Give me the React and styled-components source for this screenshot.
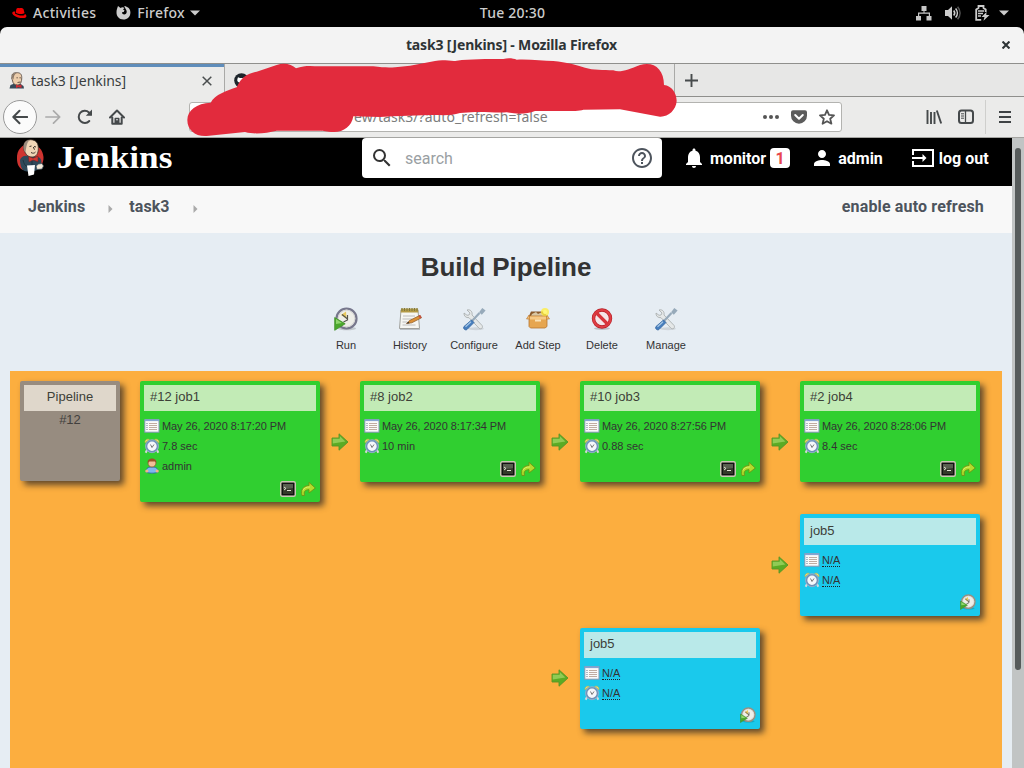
import React from 'react';
import styled, { createGlobalStyle } from 'styled-components';

const Global = createGlobalStyle`
  * { box-sizing: border-box; }
  body { margin: 0; overflow: hidden; background: #000; }
  svg { display: block; flex: none; }
`;

const ui = '"Noto Sans", "Open Sans", sans-serif';
const sans = '"Liberation Sans", Arial, sans-serif';

const Screen = styled.div`
  width: 1024px; height: 768px; overflow: hidden; position: relative;
  display: flex; flex-direction: column; font-family: ${ui};
`;
const TopBar = styled.header`
  height: 27px; background: #000; color: #ccc; font-size: 14px; font-weight: 500; flex: none;
  display: grid; grid-template-columns: 1fr auto 1fr; align-items: center; padding: 0 15px 2px 11px;
`;
const TopGroup = styled.div`
  display: flex; align-items: center; gap: ${p => p.$gap || 0}px;
  margin-left: ${p => p.$ml || 0}px;
  justify-content: ${p => (p.$end ? 'flex-end' : 'flex-start')};
`;
const StatusGroup = styled(TopGroup)`
  > svg:last-child { margin-left: -4px; }
`;
const Label = styled.span`
  white-space: nowrap; line-height: 18px; letter-spacing: ${p => p.$ls || 0}px;
  margin-left: ${p => p.$ml || 0}px;
`;
const TitleBar = styled.div`
  height: 36px; flex: none; background: #f3f3f3; border-radius: 7px 7px 0 0;
  display: grid; grid-template-columns: 24px 1fr 24px; align-items: center; padding: 0 14px 0 13px;
  font-size: 14px; font-weight: 700; color: #2e3436; text-align: center;
`;
const TabStrip = styled.div`
  height: 34px; flex: none; display: flex; background: #e7e7e6; border-top: 1px solid #8f8f8c;
`;
const Tab = styled.div`
  width: ${p => p.$w}px; display: flex; align-items: center; font-size: 14px; color: #3a3e40;
  border-right: 1px solid #a9a9a7; padding: 0 12px 0 9px;
  background: ${p => (p.$active ? '#ebebea' : 'transparent')};
  box-shadow: ${p => (p.$active ? 'inset 0 3px 0 #5f8dbb' : 'inset 0 -1px 0 #8f8f8c')};
  > svg:last-child { margin-left: auto; }
`;
const TabRest = styled.div`
  flex: 1; display: flex; align-items: center; padding-left: 9px; box-shadow: inset 0 -1px 0 #8f8f8c;
`;
const NavBar = styled.nav`
  height: 41px; flex: none; background: #ebebea; border-bottom: 1px solid #a5a5a2;
  display: flex; align-items: center; padding: 0 13px 0 3px;
`;
const NavButtons = styled.div`display: flex; align-items: center; width: 186px; gap: 16px;`;
const BackButton = styled.div`
  width: 34px; height: 34px; border: 1px solid #999; border-radius: 50%; background: #fbfbfb;
  display: grid; place-items: center; margin-right: -8px;
`;
const UrlBar = styled.div`
  width: 653px; height: 30px; border: 1px solid #b3b3b0; border-radius: 3px; background: #fff;
  display: flex; align-items: center; padding: 0 6px 0 164px; color: #7d7d7d; font-size: 14px;
`;
const UrlActions = styled.div`display: flex; gap: 12px; margin-left: auto; align-items: center;`;
const NavRight = styled.div`display: flex; margin-left: auto; align-items: center;`;
const NavRule = styled.div`width: 1px; height: 34px; background: #cfcfcd; margin: 0 13px 0 11px;`;

const Viewport = styled.main`flex: 1; min-height: 0; display: flex; background: #e6edf3;`;
const Page = styled.div`width: 1012px; font-family: ${sans};`;
const ScrollTrack = styled.div`width: 12px; background: #c1c4c4; padding: 10px 3px 0;`;
const ScrollThumb = styled.div`height: 522px; border-radius: 3px; background: #565b5b;`;

const JenkinsBar = styled.div`
  height: 48px; background: #000; display: flex; align-items: flex-start; color: #fff;
  font: 700 16px Roboto, sans-serif; padding-left: 15px;
`;
const Brand = styled.div`display: flex; width: 347px; height: 40px;`;
const Wordmark = styled.div`
  font: 700 31px/39px "Liberation Serif", serif; margin-left: 11px;
  transform: scaleX(1.135); transform-origin: left;
`;
const SearchBox = styled.div`
  width: 300px; height: 40px; background: #fff; border-radius: 4px; display: flex; align-items: center;
  padding: 0 8px 0 8px; color: #9a9fa3; font-weight: 400;
  > svg:last-child { margin-left: auto; }
  > span { padding-top: 2px; }
`;
const Account = styled.div`
  height: 40px; flex: 1; display: flex; align-items: center; padding-left: 20px;
`;
const AccountText = styled.span`
  margin-left: 4px; padding-top: 2px; line-height: 18px; white-space: nowrap;
`;
const AccountLink = styled.div`display: flex; align-items: center; margin-left: ${p => p.$ml || 0}px;`;
const Badge = styled.span`
  width: 20px; height: 20px; margin-left: 4px; border-radius: 4px; background: #fff; color: #e8474e;
  display: grid; place-items: center; margin-right: 20px;
`;
const Crumbs = styled.div`
  height: 47px; background: #f8f8f8; display: flex; align-items: center; padding: 0 28px 6px;
  font: 700 16px Roboto, sans-serif; color: #4d545d;
  > svg { margin: 5px 16px 0 23px; }
  > :last-child { margin-left: auto; }
`;
const Heading = styled.h1`
  margin: 0; padding-top: 19px; font-size: 26px; line-height: 30px; text-align: center; color: #333;
  letter-spacing: -.1px;
`;
const Actions = styled.div`display: flex; justify-content: center; margin-top: 25px; height: 64px;`;
const Action = styled.div`
  width: 64px; display: flex; flex-direction: column; align-items: center; gap: 7px;
  font-size: 11px; line-height: 14px; color: #333;
`;

const Board = styled.section`
  margin: 0 10px; height: 400px; background: #fcae3f; padding: 10px; display: grid; align-content: start;
  grid-template-columns: 120px 180px 40px 180px 40px 180px 40px 180px;
  grid-template-rows: 121px 102px 101px; row-gap: 12px; color: #333;
`;
const Card = styled.article`
  grid-column: ${p => p.$col}; grid-row: ${p => p.$row}; align-self: start;
  width: ${p => p.$w || 180}px; height: ${p => p.$h || 101}px; padding: 4px; border-radius: 2px;
  background: ${p => p.$tone.body}; box-shadow: 4px 4px 6px rgba(70, 55, 40, .85);
  display: flex; flex-direction: column;
`;
const CardTitle = styled.div`
  height: ${p => p.$h || 26}px; flex: none; background: ${p => p.$tone.title}; color: #3d4038;
  font-size: 13px; line-height: ${p => (p.$h ? 25 : 23)}px;
  padding: 0 6px; text-align: ${p => (p.$center ? 'center' : 'left')};
`;
const CardSub = styled.div`font-size: 13px; line-height: 18px; text-align: center; opacity: .85;`;
const Facts = styled.div`padding-top: 5px;`;
const Fact = styled.div`height: 20px; display: flex; align-items: center; gap: 2px; font-size: 11px;`;
const Missing = styled.span`
  line-height: 11px; border-bottom: 1px dotted #222; padding-top: 1px;
`;
const Tools = styled.div`
  display: flex; justify-content: flex-end; gap: 4px; margin-top: auto; height: ${p => p.$h}px;
`;
const ArrowCell = styled.div`
  grid-column: ${p => p.$col}; grid-row: ${p => p.$row}; display: grid; place-items: center;
  padding-bottom: ${p => (p.$row === 3 ? 2 : 0)}px;
`;

const RedHat = () => (
  <svg width="17" height="14" viewBox="0 0 17 14">
    <path d="M4.6 6.5 5.5 2.8C6.5 1.3 8 2.6 9 2.1s3 0 3.5 1l1 4c-1.8 1.4-6.4 1.3-8.9-.6Z" fill="#e00" />
    <path d="M4 5.5C.8 5.6.4 7.3 2.7 9.2c3.6 3 10 3.6 12 2.2 1.5-1.1.5-2.8-1-3.7.8 3-6.8 2-9.7-.2Z" fill="#e00" />
  </svg>
);
const FirefoxMark = () => (
  <svg width="15" height="15" viewBox="0 0 15 15">
    <path d="M2 1.1 4.5 3C6 1.700 7.500 2 8.400 3L7 4.600l1.500.7-.8 1.600-1.700.3c0 3.200 5 3 4.700-.7C10.500 4.400 9 3.500 8.200 1c4.200.7 6.300 3.400 6.200 6.700C14.200 12 11.300 14.500 7.500 14.500 3 14.500.3 11.200.5 7 .6 4.500 1.300 3.500 2 1.100Z" fill="#ccc" />
  </svg>
);
const Caret = () => <svg width="10" height="6" viewBox="0 0 10 6"><path d="M0 .5h10L5 5.500Z" fill="#ccc" /></svg>;
const Network = () => (
  <svg width="16" height="16" viewBox="0 0 16 16" fill="#c6c6c6">
    <path d="M5.500 1h5v5H8.500v1.500H14V11h1.500v4.500h-5V11h2.300V8.700H3.200V11H5v4.500H0V11h2V7.500h5.500V6h-2Z" />
  </svg>
);
const Volume = () => (
  <svg width="16" height="14" viewBox="0 0 16 14" fill="none">
    <path d="M0 4h3l4-3.700v13.400L3 10H0Z" fill="#ccc" />
    <path d="M8.700 4.500c1.200 1.500 1.200 3.500 0 5M10.600 2.500c2.300 2.600 2.300 6.400 0 9" stroke="#ccc" strokeWidth="1.600" />
    <path d="M12.600.8c3.200 3.700 3.200 8.700 0 12.400" stroke="#555" strokeWidth="1.600" />
  </svg>
);
const Battery = () => (
  <svg width="16" height="16" viewBox="0 0 16 16" fill="none" stroke="#ccc">
    <path d="M11.700 7V4.500L9.500 3V1H4.500v2L2.200 4.500v10.300h5" strokeWidth="1.800" />
    <path d="M4 6h6M4 8.500h5M4 11h3" strokeWidth="1.300" />
    <path d="m12.500 7-5 5h3l-1 3.800 6-5.800h-3.200Z" fill="#ccc" stroke="none" />
  </svg>
);
const Cross = ({ s = 10, w = 1.5, c = '#4a4e4f' }) => (
  <svg width={s} height={s} viewBox="0 0 10 10"><path d="m.7.7 8.600 8.600M9.300.7.7 9.300" stroke={c} strokeWidth={w} /></svg>
);
const Butler = () => (
  <svg width="16" height="17" viewBox="0 0 16 17">
    <path d="M.5 16.500 1.500 13l4-1.500 6 .5 3 2 .5 2.500Z" fill="#35495a" />
    <path d="M3 5C2.500 1.500 5 .5 8.500.7S13 3 12.700 7s-1.700 6-4.500 6S4 11.500 3.600 9 2 7 3 5Z" fill="#eccdab" stroke="#4d4038" strokeWidth=".8" />
    <path d="M3.300 6.500C2.500 2 5 .7 8 .9 4.800 2 5 5 4.500 7.500Z" fill="#8b7a6b" />
    <path d="M7.500 5.800h1.300M10.500 5.800h1.300M8.500 10.500l3-.5" stroke="#40342d" strokeWidth=".8" />
    <path d="m7 12.500 2.500 1 3-1v3.500l-3-1-2.500 1Z" fill="#cf2e35" />
  </svg>
);
const Octo = () => (
  <svg width="15" height="15" viewBox="0 0 15 15"><circle cx="7.500" cy="7.500" r="7.300" fill="#1d252b" /><path d="M4 4.200 6 5h3l2-.8c1.500 4-.4 5-2.500 5.300v5h-3v-5C3.500 9 2.500 7.500 4 4.200Z" fill="#fff" /></svg>
);
const Plus = () => <svg width="15" height="15" viewBox="0 0 15 15"><path d="M7.500 1v13M1 7.500h13" stroke="#474b4c" strokeWidth="1.900" /></svg>;
const FlippedSvg = styled.svg`transform: ${p => (p.$flip ? 'scaleX(-1)' : 'none')};`;
const ArrowNav = ({ left, c = '#45494b', w = 2 }) => (
  <FlippedSvg $flip={left} width="16" height="16" viewBox="0 0 16 16">
    <path d="M.8 8h13.700M8.500 1.800 14.700 8l-6.200 6.200" fill="none" stroke={c} strokeWidth={w} strokeLinecap="round" strokeLinejoin="round" />
  </FlippedSvg>
);
const Reload = () => (
  <svg width="16" height="16" viewBox="0 0 16 16">
    <path d="M12.300 12A6.100 6.100 0 1 1 12 3.400l1.500 1.800" fill="none" stroke="#45494b" strokeWidth="2" strokeLinecap="round" />
    <path d="M15 .6v6.200H8.800Z" fill="#45494b" />
  </svg>
);
const Home = () => (
  <svg width="16" height="16" viewBox="0 0 16 16" fill="none" stroke="#45494b" strokeWidth="2" strokeLinecap="round" strokeLinejoin="round">
    <path d="m1 8.500 7-7 7 7M3.300 8.500v6.200h9.400V8.500" /><path d="M6.300 14V9.500h3.400V14" strokeWidth="1.600" /><path d="M8 12v2" />
  </svg>
);
const Dots = () => <svg width="16" height="16" viewBox="0 0 16 16" fill="#555"><circle cx="2" cy="8" r="2" /><circle cx="8" cy="8" r="2" /><circle cx="14" cy="8" r="2" /></svg>;
const Pocket = () => (
  <svg width="16" height="16" viewBox="0 0 16 16"><path d="M2 1.200h12a2 2 0 0 1 2 2v3.500a8 8 0 0 1-16 0V3.200a2 2 0 0 1 2-2Z" fill="#5c5c5c" /><path d="M4.200 6 8 9.700 11.800 6" fill="none" stroke="#fff" strokeWidth="2" strokeLinecap="round" strokeLinejoin="round" /></svg>
);
const Star = () => <svg width="16" height="16" viewBox="0 0 16 16"><path d="m8 1.300 2 4.600 5 .5-3.800 3.300 1.200 5L8 12.200l-4.400 2.500 1.200-5L1 6.400l5-.5Z" fill="none" stroke="#555" strokeWidth="1.800" strokeLinejoin="round" /></svg>;
const Library = () => <svg width="16" height="16" viewBox="0 0 16 16"><path d="M1.500 1v14M5 3v12M8.500 3v12" stroke="#45494b" strokeWidth="1.900" /><path d="m10.800 1.500 4.400 13" stroke="#45494b" strokeWidth="1.900" /></svg>;
const Sidebar = () => (
  <svg width="16" height="16" viewBox="0 0 16 16" fill="none" stroke="#45494b"><rect x="1" y="1.500" width="14" height="12.500" rx="2.500" strokeWidth="2" /><path d="M7.500 2v12" strokeWidth="1.300" /><path d="M3 4.800h3M3 7h3M3 9.200h3" /></svg>
);
const Menu = () => <svg width="12" height="14" viewBox="0 0 12 14"><path d="M0 2h12M0 7h12M0 12h12" stroke="#3f4345" strokeWidth="2" /></svg>;

const JenkinsLogo = () => (
  <svg width="31" height="40" viewBox="0 0 31 40">
    <path d="M2 21C1.500 12 7 6 15 6s13 6 13.500 13c.3 6-3 11-8 13H8C4 30 2 26 2 21Z" fill="#cf3430" />
    <path d="M5 22c1-3 4-5 8-4l10 1c3 1 4 4 3 7l-4 6c-5 2-11 2-14 0-2-2-3-6-3-10Z" fill="#2f4859" />
    <path d="M9 12C7.500 5.500 10.500 1.700 15.500 1.700c5.500 0 8 3.500 7.800 8.800 0 5-2 8.500-6 8.500-4.500 0-6.500-2.500-8.300-7Z" fill="#f0d6b7" stroke="#3b3029" strokeWidth=".8" />
    <path d="M9.200 13C7.500 6 10 2 15 1.900 11.500 4 11.500 9 10.500 14Z" fill="#9b8b7d" />
    <path d="M14.500 8.500l2-.5M19 8.500l2 .5M16 14.500c2 1.200 3.500.7 4.500-.5M18.300 9l1.200 2.700" stroke="#3b3029" fill="none" strokeWidth="1" />
    <path d="m13.500 18.500 4.500 1.700 5-2v5.500l-5-1.700-4 2Z" fill="#d33833" stroke="#731f1d" strokeWidth=".5" />
    <path d="M8 22c1 4 2 6 5 7M17 23v5" stroke="#1c2e3a" fill="none" strokeWidth=".8" />
    <path d="m12 27.500 8-.5-1 9.500-5.500 1.500Z" fill="#fff" />
    <path d="m21 28 2.500-2 3.500-.5 1.500 2.500-1.500 3-5 .5Z" fill="#f5ead9" stroke="#3d5260" strokeWidth=".7" />
  </svg>
);
const SearchIcon = () => <svg width="24" height="24" viewBox="0 0 24 24"><path fill="#333" d="M15.500 14h-.79l-.28-.27A6.471 6.471 0 0 0 16 9.500 6.500 6.500 0 1 0 9.500 16c1.610 0 3.090-.59 4.230-1.570l.27.28v.79l5 4.990L20.490 19l-4.990-5zm-6 0C7.010 14 5 11.990 5 9.500S7.010 5 9.500 5 14 7.010 14 9.500 11.990 14 9.500 14z" /></svg>;
const HelpIcon = () => <svg width="24" height="24" viewBox="0 0 24 24"><path fill="#4d545d" d="M11 18h2v-2h-2v2zm1-16C6.480 2 2 6.480 2 12s4.480 10 10 10 10-4.480 10-10S17.520 2 12 2zm0 18c-4.410 0-8-3.590-8-8s3.590-8 8-8 8 3.590 8 8-3.590 8-8 8zm0-14c-2.210 0-4 1.790-4 4h2c0-1.100.9-2 2-2s2 .9 2 2c0 2-3 1.750-3 5h2c0-2.250 3-2.500 3-5 0-2.210-1.790-4-4-4z" /></svg>;
const BellIcon = () => <svg width="24" height="24" viewBox="0 0 24 24"><path fill="#fff" d="M12 22c1.100 0 2-.9 2-2h-4c0 1.100.89 2 2 2zm6-6v-5c0-3.070-1.640-5.640-4.500-6.320V4c0-.83-.67-1.500-1.500-1.500s-1.500.67-1.500 1.500v.68C7.630 5.360 6 7.920 6 11v5l-2 2v1h16v-1l-2-2z" /></svg>;
const PersonIcon = () => <svg width="24" height="24" viewBox="0 0 24 24"><path fill="#fff" d="M12 12c2.210 0 4-1.790 4-4s-1.790-4-4-4-4 1.790-4 4 1.790 4 4 4zm0 2c-2.670 0-8 1.340-8 4v2h16v-2c0-2.660-5.330-4-8-4z" /></svg>;
const ExitIcon = () => <svg width="24" height="24" viewBox="0 0 24 24" fill="none" stroke="#fff" strokeWidth="2"><path d="M2 9V4h20v16H2v-5M1 12h13" /><path d="m11.500 8 4 4-4 4Z" fill="#fff" stroke="none" /></svg>;
const CrumbArrow = () => <svg width="5" height="8" viewBox="0 0 5 8"><path d="M.5 0 4.500 4 .5 8Z" fill="#aaa" /></svg>;

const RunClock = ({ s = 24 }) => (
  <svg width={s} height={s} viewBox="0 0 24 24">
    <ellipse cx="13" cy="21.500" rx="9" ry="1.800" fill="#000" opacity=".16" />
    <circle cx="12.500" cy="11.500" r="10" fill="#eeeee8" stroke={s < 20 ? '#9a8f80' : '#77778c'} strokeWidth="2.200" />
    <circle cx="12.500" cy="11.500" r="8.300" fill="none" stroke="#c8c8ca" strokeWidth=".7" />
    <path d="M12.500 11.500 7 8l5-3.500Z" fill="#e8c85d" />
    <path d="M8 7.500 13.500 12M13.500 8v5l-4 2" fill="none" stroke="#55554d" strokeWidth="1.200" />
    <path d="m.7 10.500 10.500 6.300L.7 23.300Z" fill="#4aa72c" stroke="#3f8f28" strokeWidth=".8" />
    <path d="m2 12 6 4-6 1Z" fill="#91d66f" />
  </svg>
);
const Notepad = () => (
  <svg width="24" height="24" viewBox="0 0 24 24">
    <path d="M2 22.500h20" stroke="#9aa0a5" opacity=".6" />
    <path d="M3 3h17l1.500 18.500h-20Z" fill="#f6f6f2" stroke="#8b8b85" strokeWidth=".8" />
    <path d="M3 1.500h17l.3 4H2.700Z" fill="#b49a45" />
    <path d="M4 1v3M6.500 1v3M9 1v3M11.500 1v3M14 1v3M16.500 1v3M19 1v3" stroke="#7d7840" />
    <path d="M5 9h12M4.500 12h10M4.500 15h5M4.500 18h13" stroke="#bbb" strokeWidth="1.100" />
    <path d="m8.500 16.500 3.500-3.200 10-5 1.500 2.500-9.700 5Z" fill="#dc9035" stroke="#8a5727" strokeWidth=".7" />
    <path d="m20.500 9 1.700-1 1.300 2.600-1.600.8Z" fill="#c84d40" /><path d="m8.500 16.500 2-1.800 1 1.600Z" fill="#333" />
  </svg>
);
const WrenchDriver = () => (
  <svg width="24" height="24" viewBox="0 0 24 24">
    <ellipse cx="14" cy="21.800" rx="8" ry="1.500" fill="#000" opacity=".1" />
    <path d="m5 3 3 3-1 2-2 .3L2 6c-.3 3 2 5 5 4.700l10 10.500c2 1.600 4.500-.5 3-2.800L10 8c.7-3.200-1.500-6-5-5Z" fill="#e5e8e8" stroke="#a4a9aa" strokeWidth=".8" />
    <path d="m9.500 14.500 8-8.500M18 6l2.500-3.500 1.500 1.200L19 7" stroke="#97aaba" strokeWidth="2.200" fill="none" />
    <path d="m9.500 13 2.500 2.500-7 7c-1.700 1.300-4.500-1-3-3Z" fill="#477ebd" stroke="#3265a0" strokeWidth=".8" />
    <path d="m3.500 19.800 5.500-5" stroke="#a7c8e6" strokeWidth="1.200" />
  </svg>
);
const Package = () => (
  <svg width="24" height="24" viewBox="0 0 24 24">
    <path d="M5 4.500h13l3 4.500H3Z" fill="#8b5a2b" /><path d="m6 7 4-2 2 2 3-1.500 3 3.500H5Z" fill="#d9c7a4" />
    <path d="M3 9h18v10.500L19 21H4.500L3 19.500Z" fill="#e6a650" stroke="#b8762e" strokeWidth=".8" />
    <path d="m3 8-2.500 4H4ZM21 8l2.500 4H20Z" fill="#f1bd72" stroke="#b8762e" strokeWidth=".6" />
    <path d="M4 9.500h16v3H4Z" fill="#f6c985" /><path d="M9 12.500h6v2H9Z" fill="#fae3b8" />
    <circle cx="19" cy="5" r="4" fill="#ffed43" opacity=".8" /><circle cx="19" cy="5" r="2" fill="#fff77a" />
  </svg>
);
const NoEntry = () => (
  <svg width="24" height="24" viewBox="0 0 24 24">
    <ellipse cx="12" cy="21.500" rx="8" ry="1.500" fill="#000" opacity=".18" />
    <circle cx="12" cy="11.500" r="8.500" fill="#f5e6e8" stroke="#b61e25" strokeWidth="3.400" />
    <circle cx="12" cy="11.500" r="8.500" fill="none" stroke="#df3e44" strokeWidth="2.200" />
    <path d="m6 5.500 12 12" stroke="#d7353b" strokeWidth="3.200" />
  </svg>
);
const Calendar = () => (
  <svg width="16" height="16" viewBox="0 0 16 16">
    <rect x=".8" y="1.700" width="14.200" height="12.500" fill="#fafafa" stroke="#8197b4" />
    <path d="M.8 2.300H15" stroke="#84a4d4" strokeWidth="1.600" />
    <path d="M5 5.500h8M5 7.500h8M5 9.500h8M5 11.500h8" stroke="#c0aca2" /><path d="M2.500 5.500h1M2.500 7.500h1M2.500 9.500h1M2.500 11.500h1" stroke="#667b94" />
  </svg>
);
const Alarm = () => (
  <svg width="16" height="16" viewBox="0 0 16 16">
    <path d="m3 12-1.300 2.700M13 12l1.300 2.700" stroke="#d5d8dc" strokeWidth="2" />
    <path d="M1 4.800C.6 2 3 .5 5.300 1.500ZM15 4.800C15.400 2 13 .5 10.700 1.500Z" fill="#efdb74" stroke="#c9b04e" strokeWidth=".6" />
    <circle cx="8" cy="8.200" r="5.700" fill="#f5f7fa" stroke="#6d91b8" strokeWidth="2" />
    <circle cx="8" cy="8.200" r="6.500" fill="none" stroke="#a9bfd6" strokeWidth=".6" />
    <path d="M6.500 6.500 8 9.500 10 6.500" fill="none" stroke="#777" />
  </svg>
);
const User = () => (
  <svg width="16" height="16" viewBox="0 0 16 16">
    <path d="M2 14c0-4 2.500-5 6-5s6 1 6 5c-2 1.500-10 1.500-12 0Z" fill="#7db8f0" stroke="#295fa5" strokeWidth=".8" />
    <circle cx="2.800" cy="13" r="1.600" fill="#f0b48a" /><circle cx="13.200" cy="13" r="1.600" fill="#f0b48a" />
    <path d="M4 4.500C4 2 6 1 8 1s4 1 4 3.500S10.500 9 8 9 4 7.500 4 4.500Z" fill="#f2c099" stroke="#854f26" strokeWidth=".7" />
    <path d="M4 5c-.8-3 1.500-4.300 4-4.300s4.800 1.300 4 4.300l-1-1.500H5.500Z" fill="#9a5228" />
  </svg>
);
const TerminalIcon = () => (
  <svg width="16" height="16" viewBox="0 0 16 16">
    <rect x=".7" y=".7" width="14.600" height="14.600" rx="1.500" fill="#27291e" stroke="#c9c5b4" strokeWidth="1.400" />
    <rect x="2.500" y="2.500" width="11" height="11" fill="#34392a" stroke="#111" /><path d="M3 3h10v4Q8 8 3 8Z" fill="#596050" />
    <path d="m4 6 2 1.500L4 9M7 9.500h4" fill="none" stroke="#dfe0d0" />
  </svg>
);
const Redo = () => (
  <svg width="16" height="16" viewBox="0 0 16 16"><path d="M2 14.500C.5 9 3 4.800 9 4.500V1.300L15.300 7 9 12V8.700C5 8.700 3.500 10.500 4.500 14.500Z" fill="#b3dc2c" stroke="#6d9515" strokeWidth=".9" strokeLinejoin="round" /><path d="M3 9.500C4 7 6 6 10 6" fill="none" stroke="#d6ef6a" /></svg>
);
const FlowArrow = () => (
  <svg width="18" height="18" viewBox="0 0 18 18"><path d="M1 5h7V.8l9 8.200-9 8.200V13H1Z" fill="#5bab24" stroke="#5a9428" strokeWidth=".9" strokeLinejoin="round" /><path d="M1.800 5.800h7V3l5.500 5.500-12.500 2Z" fill="#90cb55" /></svg>
);

const Scribble = styled.svg`position: absolute; left: 180px; top: 55px;`;

const tones = {
  green: { body: '#30cf30', title: '#c2ebb6' },
  cyan: { body: '#1ac9ec', title: '#b9e9e9' },
  stone: { body: '#978c80', title: '#dfd7cb' },
};
const builds = [
  { col: 2, row: 1, h: 121, title: '#12 job1', date: 'May 26, 2020 8:17:20 PM', time: '7.8 sec', user: 'admin' },
  { col: 4, row: 1, title: '#8 job2', date: 'May 26, 2020 8:17:34 PM', time: '10 min' },
  { col: 6, row: 1, title: '#10 job3', date: 'May 26, 2020 8:27:56 PM', time: '0.88 sec' },
  { col: 8, row: 1, title: '#2 job4', date: 'May 26, 2020 8:28:06 PM', time: '8.4 sec' },
  { col: 8, row: 2, h: 102, th: 27, title: 'job5' },
  { col: 6, row: 3, title: 'job5' },
];
const arrows = [[3, 1], [5, 1], [7, 1], [7, 2], [5, 3]];
const actions = [
  ['Run', RunClock], ['History', Notepad], ['Configure', WrenchDriver],
  ['Add Step', Package], ['Delete', NoEntry], ['Manage', WrenchDriver],
];

const Build = ({ b }) => {
  const tone = b.date ? tones.green : tones.cyan;
  return (
    <Card $col={b.col} $row={b.row} $h={b.h} $tone={tone}>
      <CardTitle $h={b.th} $tone={tone}>{b.title}</CardTitle>
      <Facts>
        <Fact><Calendar />{b.date ? <Label $ls={-0.08}>{b.date}</Label> : <Missing>N/A</Missing>}</Fact>
        <Fact><Alarm />{b.time ? <Label>{b.time}</Label> : <Missing>N/A</Missing>}</Fact>
        {b.user && <Fact><User /><Label>{b.user}</Label></Fact>}
      </Facts>
      <Tools $h={b.date ? 17 : 18}>{b.date ? <><TerminalIcon /><Redo /></> : <RunClock s={16} />}</Tools>
    </Card>
  );
};

export default function App() {
  return (
    <Screen>
      <Global />
      <TopBar>
        <TopGroup>
          <RedHat /><Label $ml={5} $ls={0.3}>Activities</Label>
          <TopGroup $ml={20} $gap={5}><FirefoxMark /><Label $ml={1} $ls={0.25}>Firefox</Label><Caret /></TopGroup>
        </TopGroup>
        <Label $ml={5} $ls={0.2}>Tue 20:30</Label>
        <StatusGroup $end $gap={13}><Network /><Volume /><Battery /><Caret /></StatusGroup>
      </TopBar>
      <TitleBar><span /><Label $ls={-0.17}>task3 [Jenkins] - Mozilla Firefox</Label><TopGroup $end><Cross s={8} w={2.6} c="#2e3436" /></TopGroup></TitleBar>
      <TabStrip>
        <Tab $w={225} $active><Butler /><Label $ml={6} $ls={-0.07}>task3 [Jenkins]</Label><Cross /></Tab>
        <Tab $w={450}><Octo /><span /></Tab>
        <TabRest><Plus /></TabRest>
      </TabStrip>
      <NavBar>
        <NavButtons><BackButton><ArrowNav left /></BackButton><ArrowNav c="#aaa" w={1.7} /><Reload /><Home /></NavButtons>
        <UrlBar><Label $ls={0.05}>ew/task3/?auto_refresh=false</Label><UrlActions><Dots /><Pocket /><Star /></UrlActions></UrlBar>
        <NavRight><Library /><Label $ml={16} /><Sidebar /><NavRule /><Menu /></NavRight>
      </NavBar>
      <Viewport>
        <Page>
          <JenkinsBar>
            <Brand><JenkinsLogo /><Wordmark>Jenkins</Wordmark></Brand>
            <SearchBox><SearchIcon /><Label $ml={11}>search</Label><HelpIcon /></SearchBox>
            <Account>
              <BellIcon /><AccountText>monitor</AccountText><Badge>1</Badge>
              <AccountLink><PersonIcon /><AccountText>admin</AccountText></AccountLink>
              <AccountLink $ml={28}><ExitIcon /><AccountText>log out</AccountText></AccountLink>
            </Account>
          </JenkinsBar>
          <Crumbs>
            <Label $ls={0.1}>Jenkins</Label><CrumbArrow /><Label $ls={0.1}>task3</Label><CrumbArrow /><Label $ls={0.15}>enable auto refresh</Label>
          </Crumbs>
          <Heading>Build Pipeline</Heading>
          <Actions>
            {actions.map(([name, Icon]) => <Action key={name}><Icon /><span>{name}</span></Action>)}
          </Actions>
          <Board>
            <Card $col={1} $row={1} $w={100} $h={100} $tone={tones.stone}>
              <CardTitle $center $tone={tones.stone}>Pipeline</CardTitle><CardSub>#12</CardSub>
            </Card>
            {builds.map((b, i) => <Build key={i} b={b} />)}
            {arrows.map(([c, r]) => <ArrowCell key={`${c}-${r}`} $col={c} $row={r}><FlowArrow /></ArrowCell>)}
          </Board>
        </Page>
        <ScrollTrack><ScrollThumb /></ScrollTrack>
      </Viewport>
      <Scribble width="520" height="90" viewBox="0 0 1560 270">
        <path fill="#e22b3d" d="M22 195C22 165 50 145 92 143C105 118 140 108 170 97C185 65 200 58 230 50L290 30C310 22 335 26 348 40C375 30 395 33 420 34L580 34C640 42 660 34 690 32L765 18C790 12 815 20 830 17C870 12 920 12 970 12C985 8 1000 10 1010 14C1050 12 1090 18 1120 18C1160 22 1190 30 1215 38C1240 46 1270 44 1300 46C1320 54 1345 44 1380 30C1420 18 1452 40 1452 90C1475 92 1490 115 1490 138C1488 165 1465 186 1440 185L1320 163L1210 164C1190 170 1150 168 1065 168C1040 178 1010 178 980 172C950 174 920 170 885 171L840 174C810 184 780 179 750 180L640 184L600 186L520 184C515 215 490 232 460 231C440 230 430 227 420 227L290 227C260 233 230 240 195 231L80 243C45 245 22 225 22 195Z" />
      </Scribble>
    </Screen>
  );
}
